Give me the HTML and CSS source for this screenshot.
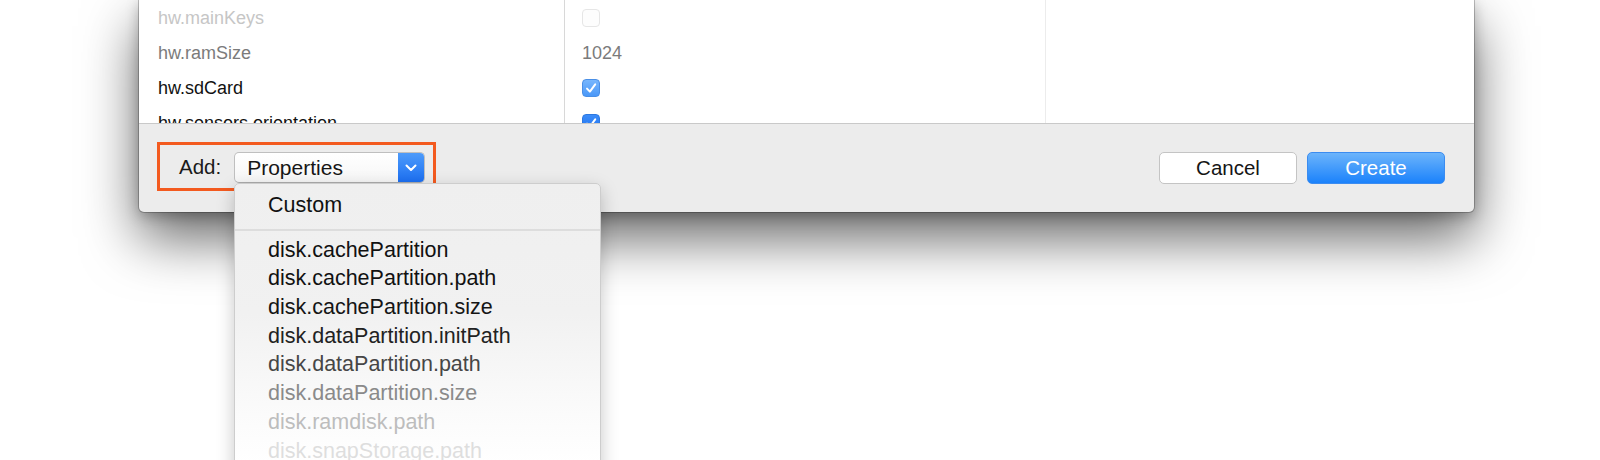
FILE: index.html
```html
<!DOCTYPE html>
<html>
<head>
<meta charset="utf-8">
<link rel="stylesheet" href="styles.css">
</head>
<body>
<div class="page">
  <div class="window">
    <div class="table">
      <div class="row faint">
        <div class="cell name">hw.mainKeys</div>
        <div class="cell value"><span class="check off"></span></div>
        <div class="cell extra"></div>
      </div>
      <div class="row dim">
        <div class="cell name">hw.ramSize</div>
        <div class="cell value">1024</div>
        <div class="cell extra"></div>
      </div>
      <div class="row">
        <div class="cell name">hw.sdCard</div>
        <div class="cell value"><span class="check on"><svg viewBox="0 0 18 18" width="18" height="18"><path d="M5 9.6 L7.9 12.6 L13.2 5.4" fill="none" stroke="#fff" stroke-width="2" stroke-linecap="round" stroke-linejoin="round"/></svg></span></div>
        <div class="cell extra"></div>
      </div>
      <div class="row">
        <div class="cell name">hw.sensors.orientation</div>
        <div class="cell value"><span class="check on dark"><svg viewBox="0 0 18 18" width="18" height="18"><path d="M5 9.6 L7.9 12.6 L13.2 5.4" fill="none" stroke="#fff" stroke-width="2" stroke-linecap="round" stroke-linejoin="round"/></svg></span></div>
        <div class="cell extra"></div>
      </div>
    </div>
    <div class="footer">
      <div class="highlight">
        <span class="add-label">Add:</span>
        <div class="popup">
          <span class="popup-text">Properties</span>
          <span class="popup-arrow"><svg viewBox="0 0 26 29" width="26" height="29"><path d="M8.5 12.5 L13 17 L17.5 12.5" fill="none" stroke="#fff" stroke-width="2" stroke-linecap="round" stroke-linejoin="round"/></svg></span>
        </div>
      </div>
      <div class="buttons">
        <button class="btn cancel">Cancel</button>
        <button class="btn create">Create</button>
      </div>
    </div>
  </div>

  <div class="menu">
    <div class="item c1">Custom</div>
    <div class="sep"></div>
    <div class="item c1">disk.cachePartition</div>
    <div class="item c1">disk.cachePartition.path</div>
    <div class="item c2">disk.cachePartition.size</div>
    <div class="item c3">disk.dataPartition.initPath</div>
    <div class="item c4">disk.dataPartition.path</div>
    <div class="item c5">disk.dataPartition.size</div>
    <div class="item c6">disk.ramdisk.path</div>
    <div class="item c7">disk.snapStorage.path</div>
  </div>
</div>
</body>
</html>
```

FILE: styles.css
```css
html, body {
  margin: 0;
  padding: 0;
  background: #ffffff;
}
body {
  width: 1600px;
  height: 460px;
  overflow: hidden;
  font-family: "Liberation Sans", Arial, sans-serif;
}
.page {
  position: relative;
  width: 1600px;
  height: 460px;
  overflow: hidden;
}
.window {
  margin-left: 139px;
  width: 1335px;
  height: 212px;
  display: flex;
  flex-direction: column;
  background: #ececec;
  border-radius: 0 0 5px 5px;
  box-shadow: 0 0 0 1px rgba(0,0,0,0.22), 0 26px 55px rgba(0,0,0,0.6), 0 4px 14px rgba(0,0,0,0.25);
  overflow: hidden;
}
.table {
  height: 123px;
  overflow: hidden;
  background: #ffffff;
  border-bottom: 1px solid #c9c9c9;
}
.row {
  display: grid;
  grid-template-columns: 426px 481px 1fr;
  height: 35px;
}
.cell {
  display: flex;
  align-items: center;
  font-size: 18px;
  color: #111;
  padding-top: 1px;
}
.name {
  padding-left: 19px;
  border-right: 1px solid #d8d8d8;
}
.value {
  padding-left: 17px;
  border-right: 1px solid #ececec;
}
.row.faint .cell { color: #c6c6c6; }
.row.dim .cell { color: #7b7b7b; }

.check {
  display: block;
  width: 18px;
  height: 18px;
  box-sizing: border-box;
  border-radius: 4px;
}
.check svg { display: block; margin: -1px; }
.check.off {
  border: 1px solid #e6e6e6;
  background: #fdfdfd;
}
.check.on {
  background: linear-gradient(#77b6fd, #4a98f8);
  border: 1px solid #4a8fe6;
}
.check.on.dark {
  background: linear-gradient(#3b8cf8, #1f74f2);
  border-color: #2c78e0;
}

.footer {
  flex: 1;
  display: flex;
  align-items: center;
  justify-content: space-between;
  padding: 0 29px 0 18px;
}
.highlight {
  display: flex;
  align-items: center;
  height: 43px;
  border: 3px solid #f35a1f;
  padding: 0 8px 0 19px;
  margin-top: -3px;
}
.add-label {
  font-size: 20.5px;
  color: #1a1a1a;
  margin-right: 13px;
}
.popup {
  display: flex;
  align-items: stretch;
  width: 191px;
  height: 31px;
  box-sizing: border-box;
  border: 1px solid #bfbfbf;
  border-bottom-color: #adadad;
  border-radius: 5px;
  background: linear-gradient(#ffffff, #f6f6f6);
  overflow: hidden;
  margin-top: 2px;
}
.popup-text {
  flex: 1;
  display: flex;
  align-items: center;
  padding-left: 12px;
  font-size: 21px;
  color: #161616;
}
.popup-arrow {
  width: 26px;
  display: flex;
  align-items: center;
  justify-content: center;
  background: linear-gradient(#4d9bfa, #1c6ff2);
}
.popup-arrow svg { display: block; }

.buttons {
  display: flex;
  gap: 10px;
}
.btn {
  width: 138px;
  height: 32px;
  box-sizing: border-box;
  border-radius: 5px;
  font-family: "Liberation Sans", Arial, sans-serif;
  font-size: 20.5px;
  padding: 0;
}
.cancel {
  background: #ffffff;
  border: 1px solid #c4c4c4;
  color: #151515;
}
.create {
  background: linear-gradient(#6cb4fb, #1b82fb);
  border: 1px solid #3b8cf0;
  color: #ffffff;
}

.menu {
  position: absolute;
  left: 234px;
  top: 183px;
  width: 367px;
  height: 300px;
  box-sizing: border-box;
  padding-top: 7px;
  border: 1px solid #cdcdcd;
  border-radius: 5px 5px 0 0;
  background: linear-gradient(#efefef 0px, #f1f1f1 130px, #fbfbfb 230px, #ffffff 280px);
  box-shadow: 0 6px 18px rgba(0,0,0,0.22);
}
.item {
  height: 28.7px;
  line-height: 28.7px;
  padding-left: 33px;
  font-size: 21.5px;
  color: #111;
  white-space: nowrap;
}
.sep {
  height: 2px;
  background: #dddddd;
  margin: 9px 0 5px;
}
.c1 { color: #111; }
.c2 { color: #151515; }
.c3 { color: #222; }
.c4 { color: #464646; }
.c5 { color: #8a8a8a; }
.c6 { color: #bdbdbd; }
.c7 { color: #dedede; }
```
